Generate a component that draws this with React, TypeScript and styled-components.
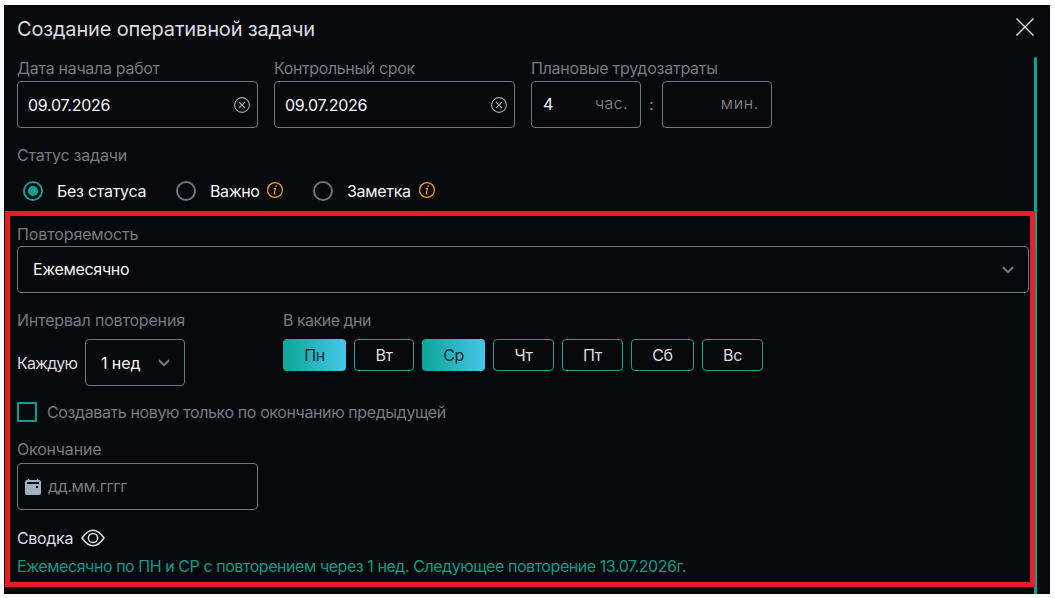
import React from "react";
import styled, { createGlobalStyle } from "styled-components";

const GlobalStyle = createGlobalStyle`
  * { box-sizing: border-box; }
  body { margin: 0; background: #fff; }
`;

const Page = styled.div`
  width: 1055px;
  height: 598px;
  padding: 5px 5px 4px 4px;
  background: linear-gradient(to right, #f8faff 4px, #fff 4px);
  font-family: Inter, "Liberation Sans", sans-serif;
  font-size: 16px;
  line-height: 24px;
`;

const Dialog = styled.main`
  position: relative;
  display: flex;
  flex-direction: column;
  height: 589px;
  background: #06080c;
  color: #f8f9fa;
`;

const Header = styled.header`
  display: flex;
  justify-content: space-between;
  align-items: center;
  height: 48px;
  padding: 0 16px 0 13px;
`;

const Title = styled.h1`
  margin: 0;
  font-size: 20px;
  font-weight: 400;
  letter-spacing: -0.17px;
  color: #dcdde3;
`;

const CloseButton = styled.button`
  display: flex;
  margin: -4px 0 0;
  padding: 0;
  border: 0;
  background: none;
  color: #d9dbe0;
`;

const Content = styled.div`
  display: flex;
  flex: 1;
  min-height: 0;
  justify-content: space-between;
  padding: 4px 13px 0 13px;
`;

const Form = styled.form`
  display: flex;
  flex-direction: column;
  width: 1012px;
`;

const ScrollThumb = styled.div`
  width: 3px;
  border-radius: 2px 2px 0 0;
  background: #0aa294;
`;

const Text = styled.span<{ $track?: number; $color?: string; $lift?: number }>`
  padding-bottom: ${(p) => p.$lift ?? 0}px;
  letter-spacing: ${(p) => p.$track ?? -0.15}px;
  color: ${(p) => p.$color ?? "inherit"};
  white-space: nowrap;
`;

const Label = styled.div<{ $track?: number; $line?: number }>`
  height: 24px;
  line-height: ${(p) => p.$line ?? 22}px;
  color: #767c84;
  letter-spacing: ${(p) => p.$track ?? -0.1}px;
  white-space: nowrap;
`;

const Row = styled.div<{ $gap?: number; $top?: number; $align?: string }>`
  display: flex;
  align-items: ${(p) => p.$align ?? "center"};
  gap: ${(p) => p.$gap ?? 0}px;
  margin-top: ${(p) => p.$top ?? 0}px;
`;

const Group = styled.div<{ $top?: number; $width?: number }>`
  margin-top: ${(p) => p.$top ?? 0}px;
  width: ${(p) => (p.$width ? `${p.$width}px` : "auto")};
`;

const Field = styled.div<{ $width: number; $pad: string }>`
  display: flex;
  align-items: center;
  justify-content: space-between;
  width: ${(p) => p.$width}px;
  height: 47px;
  padding: ${(p) => p.$pad};
  border: 1px solid #66798a;
  border-radius: 4px;
`;

const Unit = styled.span<{ $track: number }>`
  margin-left: auto;
  margin-top: -3px;
  font-weight: 300;
  color: #868d95;
  letter-spacing: ${(p) => p.$track}px;
`;

const Colon = styled.span`
  width: 21px;
  text-align: center;
  font-size: 15px;
  color: #868d95;
`;

const Option = styled.label`
  display: flex;
  align-items: center;
  height: 20px;
`;

const Radio = styled.span<{ $on?: boolean }>`
  display: flex;
  align-items: center;
  justify-content: center;
  width: 20px;
  height: 20px;
  margin-right: 14px;
  border: 2px solid ${(p) => (p.$on ? "#0aa294" : "#667787")};
  border-radius: 50%;
  &::after {
    content: "";
    width: 10px;
    height: 10px;
    border-radius: 50%;
    background: ${(p) => (p.$on ? "#0aa294" : "transparent")};
  }
`;

const OptionText = styled.span<{ $width: number; $track: number }>`
  width: ${(p) => p.$width}px;
  letter-spacing: ${(p) => p.$track}px;
  white-space: nowrap;
`;

const InfoSvg = styled.svg`
  margin-top: -2px;
`;

const Day = styled.button<{ $width: number; $on?: boolean }>`
  width: ${(p) => p.$width}px;
  height: 32px;
  padding: 0;
  border: ${(p) => (p.$on ? "0" : "1px solid #0aa294")};
  border-radius: 4px;
  background: ${(p) => (p.$on ? "linear-gradient(to right, #0ca598, #46c6e8)" : "transparent")};
  color: ${(p) => (p.$on ? "#0b2a30" : "#dcdde3")};
  font: inherit;
  letter-spacing: -0.4px;
`;

const Checkbox = styled.span`
  width: 20px;
  height: 20px;
  border: 2px solid #0aa294;
  border-radius: 1px;
`;

const Summary = styled.p`
  margin: 4px 0 0;
  color: #0e9a87;
  letter-spacing: -0.442px;
  white-space: nowrap;
`;

const Highlight = styled.div`
  position: absolute;
  left: 1px;
  top: 206px;
  width: 1030px;
  height: 376px;
  border: 5px solid #ed1c24;
  pointer-events: none;
`;

const ClearIcon = () => (
  <svg width="16" height="16" viewBox="0 0 16 16" fill="none" stroke="#98a8b5" strokeWidth="1.1">
    <circle cx="8" cy="8" r="7.4" />
    <path d="M5 5l6 6M11 5l-6 6" />
  </svg>
);

const InfoIcon = () => (
  <InfoSvg width="16" height="16" viewBox="0 0 16 16" fill="none" stroke="#f5a31f">
    <circle cx="8" cy="8" r="7.4" strokeWidth="1.2" />
    <path d="M6.7 6.6h1.7L7.2 12h1.4" strokeWidth="1.2" />
    <circle cx="9" cy="4.1" r="0.85" fill="#f5a31f" stroke="none" />
  </InfoSvg>
);

const Chevron = () => (
  <svg width="12" height="8" viewBox="0 0 12 8" fill="none" stroke="#6f8190" strokeWidth="2">
    <path d="M0.9 1.2L6 6.2l5.1-5" />
  </svg>
);

const CalendarIcon = () => (
  <svg width="16" height="16" viewBox="0 0 16 16">
    <path
      fill="#a3b2c0"
      fillRule="evenodd"
      d="M2 1h.7V0h1.5v1h7.6V0h1.5v1h.7a2 2 0 0 1 2 2v11a2 2 0 0 1-2 2H2a2 2 0 0 1-2-2V3a2 2 0 0 1 2-2zM2 3v2h12V3zM11 7v2h2V7z"
    />
  </svg>
);

const EyeIcon = () => (
  <svg width="24" height="18" viewBox="0 0 24 18" fill="none" stroke="#dcdde3" strokeWidth="1.5">
    <path d="M1 9C4.8 3.6 8.2 1.3 12 1.3S19.2 3.6 23 9C19.2 14.4 15.8 16.7 12 16.7S4.8 14.4 1 9z" />
    <circle cx="12" cy="9" r="4.6" />
  </svg>
);

const days = [
  { name: "Пн", width: 63, on: true },
  { name: "Вт", width: 60 },
  { name: "Ср", width: 63, on: true },
  { name: "Чт", width: 61 },
  { name: "Пт", width: 61 },
  { name: "Сб", width: 63 },
  { name: "Вс", width: 61 },
];

const DateField = ({ value }: { value: string }) => (
  <Field $width={241} $pad="0 7px 0 10px">
    <Text $track={-0.26}>{value}</Text>
    <ClearIcon />
  </Field>
);

export default function App() {
  return (
    <Page>
      <GlobalStyle />
      <Dialog>
        <Header>
          <Title>Создание оперативной задачи</Title>
          <CloseButton type="button" aria-label="Закрыть">
            <svg width="18" height="18" viewBox="0 0 18 18" stroke="currentColor" strokeWidth="1.4">
              <path d="M.5 .5l17 17M17.5 .5l-17 17" />
            </svg>
          </CloseButton>
        </Header>
        <Content>
          <Form>
            <Row $gap={16}>
              <Group>
                <Label $track={-0.3}>Дата начала работ</Label>
                <DateField value="09.07.2026" />
              </Group>
              <Group>
                <Label $track={-0.38}>Контрольный срок</Label>
                <DateField value="09.07.2026" />
              </Group>
              <Group>
                <Label $track={-0.24}>Плановые трудозатраты</Label>
                <Row>
                  <Field $width={110} $pad="0 12px 0 11px">
                    <Text $lift={2}>4</Text>
                    <Unit $track={0.4}>час.</Unit>
                  </Field>
                  <Colon>:</Colon>
                  <Field $width={110} $pad="0 12px 0 11px">
                    <Unit $track={0.7}>мин.</Unit>
                  </Field>
                </Row>
              </Group>
            </Row>
            <Group $top={16}>
              <Label $track={-0.22}>Статус задачи</Label>
              <Row $top={13}>
                <Group $width={6} />
                <Option>
                  <Radio $on />
                  <OptionText $width={119} $track={-0.28}>Без статуса</OptionText>
                </Option>
                <Option>
                  <Radio />
                  <OptionText $width={57} $track={-0.4}>Важно</OptionText>
                  <InfoIcon />
                </Option>
                <Group $width={30} />
                <Option>
                  <Radio />
                  <OptionText $width={72} $track={-0.3}>Заметка</OptionText>
                  <InfoIcon />
                </Option>
              </Row>
            </Group>
            <Group $top={21}>
              <Label $track={-0.12} $line={24}>Повторяемость</Label>
              <Field $width={1012} $pad="0 14px 0 15px">
                <Text $track={-0.33} $lift={2}>Ежемесячно</Text>
                <Chevron />
              </Field>
            </Group>
            <Row $top={16} $align="flex-start">
              <Group $width={266}>
                <Label $track={-0.18}>Интервал повторения</Label>
                <Row $top={6} $gap={8}>
                  <Group $width={60}>
                    <Text $track={-0.85} $color="#dcdde3">Каждую</Text>
                  </Group>
                  <Field $width={100} $pad="0 14px 0 15px">
                    <Text $track={-0.1}>1 нед</Text>
                    <Chevron />
                  </Field>
                </Row>
              </Group>
              <Group>
                <Label $track={-0.52}>В какие дни</Label>
                <Row $top={6} $gap={8}>
                  {days.map((d) => (
                    <Day key={d.name} type="button" $width={d.width} $on={d.on}>
                      {d.name}
                    </Day>
                  ))}
                </Row>
              </Group>
            </Row>
            <Row $top={14} $gap={10}>
              <Checkbox />
              <Text $track={-0.39} $color="#767c84">
                Создавать новую только по окончанию предыдущей
              </Text>
            </Row>
            <Group $top={15}>
              <Label $track={-0.2} $line={20}>Окончание</Label>
              <Field $width={241} $pad="0 7px">
                <Row $gap={7}>
                  <CalendarIcon />
                  <Text $track={-0.38} $lift={2} $color="#767c84">дд.мм.гггг</Text>
                </Row>
              </Field>
            </Group>
            <Row $top={16} $gap={8}>
              <Text $track={-0.33} $color="#dcdde3">Сводка</Text>
              <EyeIcon />
            </Row>
            <Summary>
              Ежемесячно по ПН и СР с повторением через 1 нед. Следующее повторение 13.07.2026г.
            </Summary>
          </Form>
          <ScrollThumb />
        </Content>
        <Highlight />
      </Dialog>
    </Page>
  );
}
